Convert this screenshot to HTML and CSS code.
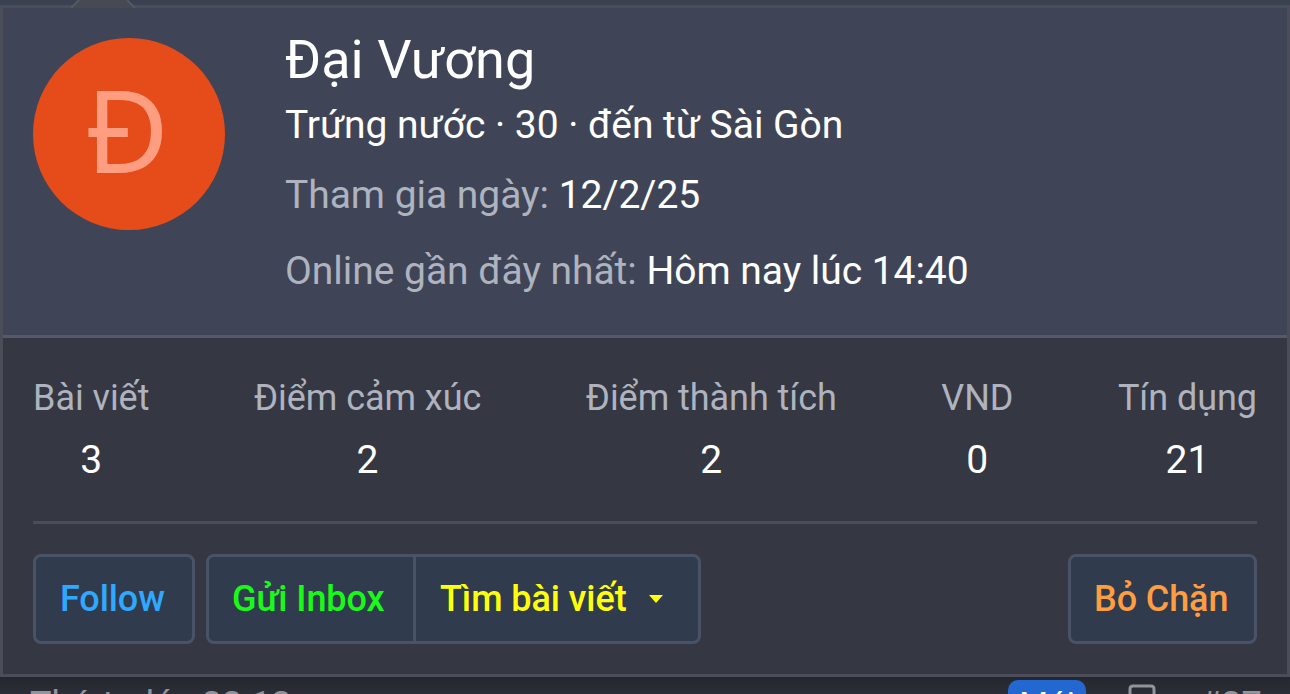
FILE: index.html
```html
<!DOCTYPE html>
<html lang="vi">
<head>
  <meta charset="UTF-8">
  <meta name="viewport" content="width=device-width, initial-scale=1.0">
  <title>Đại Vương</title>
  <link rel="stylesheet" href="styles.css">
</head>
<body>
  <div class="card">
    <svg class="card-arrow" width="66" height="8" viewBox="0 0 66 8">
      <path d="M0 8 L8 0 H58 L66 8 Z" fill="#474a53"/>
      <path d="M1 8 L9 0 M57 0 L65 8" stroke="#555963" stroke-width="2"/>
    </svg>
    <div class="card-header">
      <div class="avatar"><span>Đ</span></div>
      <div class="member">
        <h1 class="name">Đại Vương</h1>
        <div class="blurb">Trứng nước · 30 · đến từ Sài Gòn</div>
        <dl class="joined"><dt>Tham gia ngày:</dt> <dd>12/2/25</dd></dl>
        <dl class="seen"><dt>Online gần đây nhất:</dt> <dd>Hôm nay lúc 14:40</dd></dl>
      </div>
    </div>
    <div class="card-body">
      <div class="stats">
        <dl><dt>Bài viết</dt><dd>3</dd></dl>
        <dl><dt>Điểm cảm xúc</dt><dd>2</dd></dl>
        <dl><dt>Điểm thành tích</dt><dd>2</dd></dl>
        <dl><dt>VND</dt><dd>0</dd></dl>
        <dl><dt>Tín dụng</dt><dd>21</dd></dl>
      </div>
      <div class="actions">
        <button class="btn follow">Follow</button>
        <div class="group">
          <button class="btn inbox">Gửi Inbox</button>
          <button class="btn find">Tìm bài viết
            <svg width="14" height="8" viewBox="0 0 14 8"><path d="M0 0 H14 L7 8 Z" fill="currentColor"/></svg>
          </button>
        </div>
        <button class="btn block">Bỏ Chặn</button>
      </div>
    </div>
  </div>
  <div class="post-bar">
    <span class="post-time">Thứ tư lúc 22:12</span>
    <span class="badge">Mới</span>
    <svg class="bookmark" width="28" height="36" viewBox="0 0 28 36">
      <path d="M2 34 V5 Q2 2 5 2 H23 Q26 2 26 5 V34 L14 28 Z" fill="none" stroke="#92949b" stroke-width="3"/>
    </svg>
    <span class="post-number">#27</span>
  </div>
</body>
</html>
```

FILE: styles.css
```css
* {
  box-sizing: border-box;
}
body {
  margin: 0;
  height: 694px;
  padding-top: 5px;
  overflow: hidden;
  background: #3a4150;
  font-family: Roboto, sans-serif;
  color: #fff;
}
h1, dl, dd {
  margin: 0;
  font-weight: 400;
}

.card {
  position: relative;
  height: 672px;
  border: 3px solid #4b4e58;
  background: #353842;
}
.card-arrow {
  position: absolute;
  top: -8px;
  left: 67px;
}
.card-header {
  display: flex;
  gap: 60px;
  height: 330px;
  padding: 30px;
  background: #3f4556;
  border-bottom: 3px solid #555a6b;
}
.avatar {
  display: flex;
  align-items: center;
  justify-content: center;
  width: 192px;
  height: 192px;
  padding: 0 4px 11px 0;
  border-radius: 50%;
  background: #e64c19;
  color: #ff9d80;
  font-family: "Noto Sans", sans-serif;
  font-size: 115px;
  line-height: 1;
}
.name {
  margin-top: -10px;
  font-size: 54px;
  line-height: 64px;
}
.blurb, .joined, .seen {
  font-size: 39px;
  line-height: 46px;
  letter-spacing: -0.03px;
}
.blurb {
  margin-top: 10px;
}
.joined {
  margin-top: 24px;
}
.seen {
  margin-top: 30px;
}
.member dt, .member dd {
  display: inline;
}
dt {
  color: #aeb3bf;
}

.card-body {
  padding: 0 30px;
}
.stats {
  display: flex;
  justify-content: space-between;
  height: 186px;
  padding-top: 38px;
  border-bottom: 3px solid #4b4e5a;
  text-align: center;
}
.stats dt {
  font-size: 36px;
  line-height: 44px;
  letter-spacing: -0.05px;
}
.stats dd {
  margin-top: 17px;
  font-size: 39px;
  line-height: 46px;
}

.actions {
  display: flex;
  gap: 11px;
  padding-top: 30px;
}
.btn {
  height: 90px;
  padding: 0 24px;
  border: 3px solid #495267;
  border-radius: 8px;
  background: #313b4e;
  font: 500 36px Roboto, sans-serif;
  letter-spacing: -0.1px;
  text-align: left;
  white-space: nowrap;
}
.group {
  display: flex;
}
.follow {
  width: 162px;
  color: #2fa8ff;
}
.inbox {
  width: 210px;
  padding: 0 23px;
  border-right: 3px solid #495267;
  border-radius: 8px 0 0 8px;
  color: #18fb18;
}
.find {
  width: 285px;
  border-left: 0;
  border-radius: 0 8px 8px 0;
  color: #ffff0a;
}
.find svg {
  margin: 0 6px 8px 14px;
}
.block {
  width: 189px;
  margin-left: auto;
  padding: 0 23px;
  color: #ff9e40;
}

.post-bar {
  display: flex;
  height: 17px;
  padding: 3px 32px 0 30px;
  overflow: hidden;
  background: linear-gradient(#242730, #2b2e37);
  color: #92949b;
  font-size: 36px;
  line-height: 42px;
}
.post-time {
  margin-top: 4px;
}
.badge {
  width: 78px;
  height: 48px;
  margin-left: auto;
  border-radius: 10px;
  background: #2368d0;
  color: #fff;
  font-size: 33px;
  line-height: 49px;
  text-align: center;
}
.bookmark {
  margin: 4px 0 0 42px;
}
.post-number {
  width: 59px;
  margin: 4px 0 0 43px;
}
```
